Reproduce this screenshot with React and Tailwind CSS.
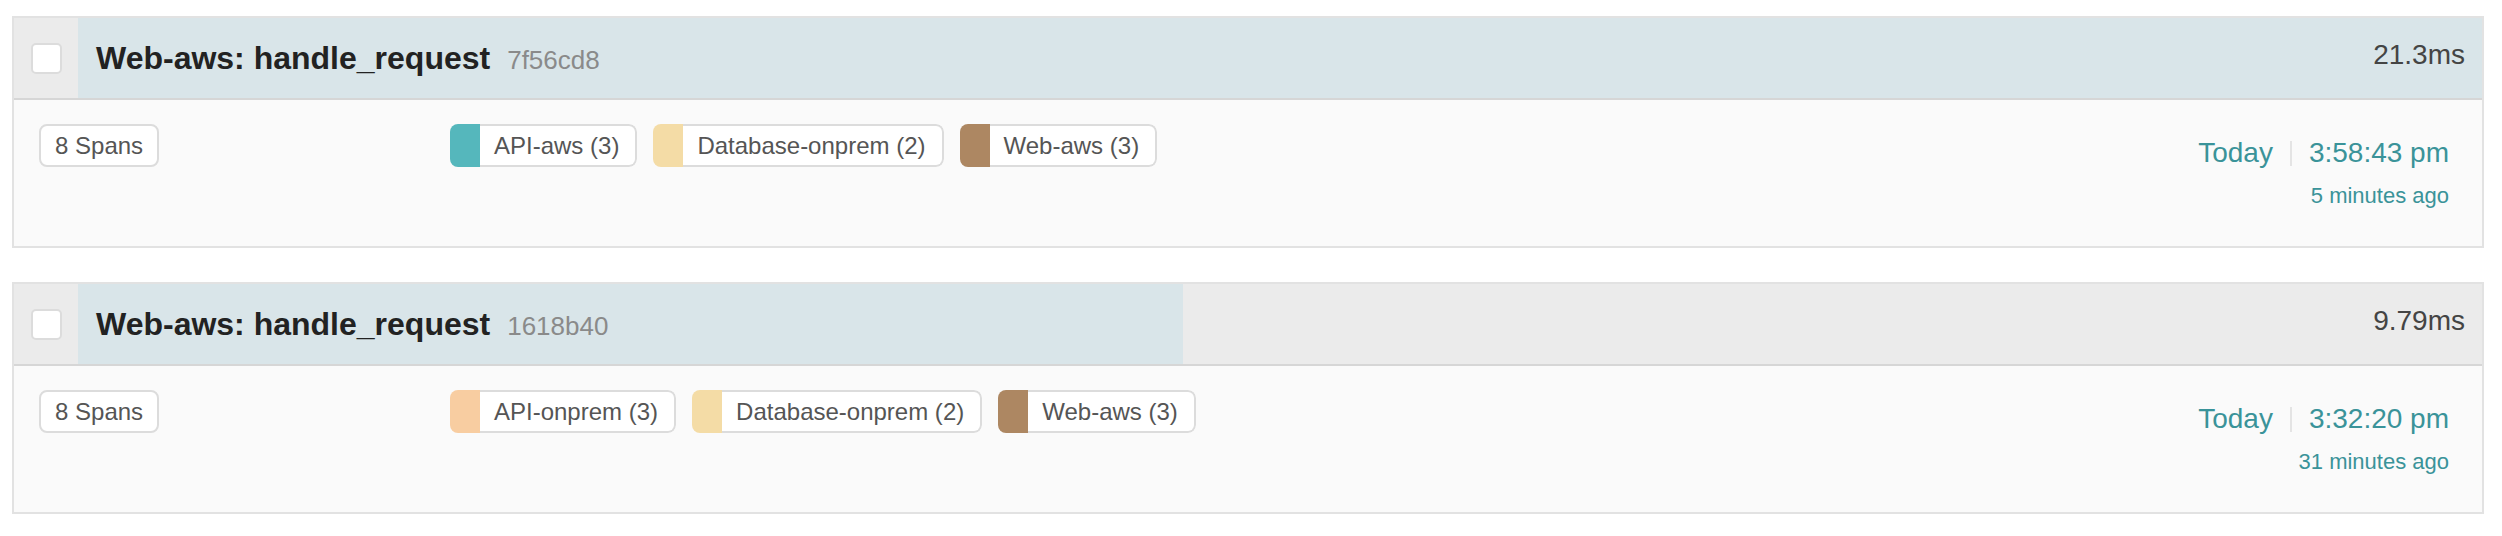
import React from 'react';

const traces = [
    {
        id: '7f56cd8',
        name: 'Web-aws: handle_request',
        duration: 21.3,
        durationLabel: '21.3ms',
        spans: 8,
        services: [
            { name: 'API-aws', count: 3, color: '#55b7bc' },
            { name: 'Database-onprem', count: 2, color: '#f4dca6' },
            { name: 'Web-aws', count: 3, color: '#ad8762' },
        ],
        day: 'Today',
        time: '3:58:43 pm',
        ago: '5 minutes ago',
    },
    {
        id: '1618b40',
        name: 'Web-aws: handle_request',
        duration: 9.79,
        durationLabel: '9.79ms',
        spans: 8,
        services: [
            { name: 'API-onprem', count: 3, color: '#f8cda1' },
            { name: 'Database-onprem', count: 2, color: '#f4dca6' },
            { name: 'Web-aws', count: 3, color: '#ad8762' },
        ],
        day: 'Today',
        time: '3:32:20 pm',
        ago: '31 minutes ago',
    },
];

const maxDuration = Math.max(...traces.map((t) => t.duration));

const ServiceTag = ({ service }) => (
    <div className="flex h-[43px] rounded-[8px] overflow-hidden">
        <div className="w-[30px] shrink-0" style={{ backgroundColor: service.color }}></div>
        <div className="flex items-center pl-[14px] pr-[16px] bg-white border-2 border-l-0 border-[#dcdcdc] rounded-r-[8px] text-[24px] text-[#555] whitespace-nowrap">
            {service.name} ({service.count})
        </div>
    </div>
);

const TraceCard = ({ trace }) => {
    const pct = (trace.duration / maxDuration) * 100;

    return (
        <div className="border-2 border-[#e2e2e2] bg-[#fafafa]">
            {/* Header with duration bar */}
            <div className="flex h-[82px] border-b-2 border-[#d6d6d6] bg-[#ebebeb]">
                <div className="w-[64px] shrink-0 flex items-center justify-center">
                    <div className="w-[31px] h-[31px] rounded-[5px] bg-white border-2 border-[#dcdcdc]"></div>
                </div>
                <div className="relative flex-1 flex items-center pl-[18px] pr-[17px]">
                    <div className="absolute inset-y-0 left-0 bg-[#d9e5e9]" style={{ width: `${pct}%` }}></div>
                    <div className="relative flex items-baseline gap-[17px]">
                        <span className="text-[32px] font-bold text-[#222] leading-none">{trace.name}</span>
                        <span className="text-[26px] text-[#8a8a8a] leading-none">{trace.id}</span>
                    </div>
                    <span className="relative ml-auto mb-[6px] text-[28px] text-[#444] leading-none">{trace.durationLabel}</span>
                </div>
            </div>

            {/* Body */}
            <div className="flex items-start h-[146px] pt-[24px] pl-[25px] pr-[33px]">
                <div className="w-[411px] shrink-0">
                    <div className="inline-flex items-center h-[43px] px-[14px] bg-white border-2 border-[#dcdcdc] rounded-[8px] text-[24px] text-[#555]">
                        {trace.spans} Spans
                    </div>
                </div>
                <div className="flex gap-[16px]">
                    {trace.services.map((s) => (
                        <ServiceTag key={s.name} service={s} />
                    ))}
                </div>
                <div className="ml-auto mt-[15px] flex flex-col items-end text-[#3a9399]">
                    <div className="flex items-center text-[28px] leading-none">
                        <span>{trace.day}</span>
                        <span className="mx-[17px] w-[2px] h-[25px] bg-[#e4e4e4]"></span>
                        <span>{trace.time}</span>
                    </div>
                    <div className="mt-[18px] text-[22px] leading-none">{trace.ago}</div>
                </div>
            </div>
        </div>
    );
};

const App = () => {
    return (
        <div className="w-[2502px] h-[536px] bg-white pt-[16px] pl-[12px] pr-[18px] flex flex-col gap-[34px]" style={{ fontFamily: '"Liberation Sans", Arial, sans-serif' }}>
            {traces.map((t) => (
                <TraceCard key={t.id} trace={t} />
            ))}
        </div>
    );
};

export default App;
